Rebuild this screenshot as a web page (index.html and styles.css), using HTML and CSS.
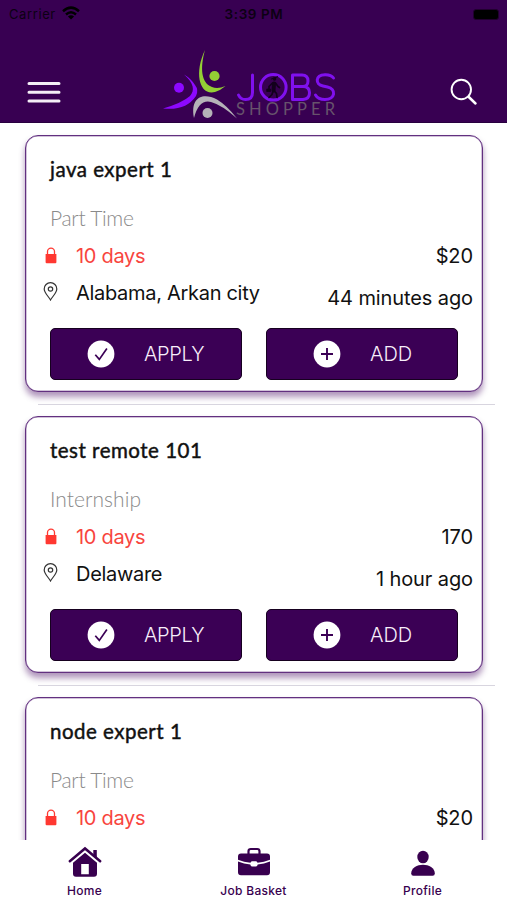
FILE: index.html
```html
<!DOCTYPE html>
<html lang="en">
<head>
<meta charset="utf-8">
<title>Jobs Shopper</title>
<link rel="stylesheet" href="styles.css">
</head>
<body>
<svg class="defs" aria-hidden="true">
  <symbol id="lock" viewBox="0 0 12 17"><path d="M.6 7h10.8v8.2q0 1-1 1H1.600q-1 0-1-1z" fill="currentColor"/><path d="M2.500 7.500V4.600a3.500 3.500 0 0 1 7 0v2.900" fill="none" stroke="currentColor" stroke-width="1.300"/></symbol>
  <symbol id="pin" viewBox="0 0 15 19"><path d="M7.500 18C5.800 14.800 1.200 10.800 1.200 7a6.300 6.300 0 0 1 12.600 0c0 3.800-4.600 7.800-6.300 11z" fill="none" stroke="currentColor" stroke-width="1.200"/><circle cx="7.500" cy="7" r="2.200" fill="none" stroke="currentColor" stroke-width="1.200"/></symbol>
  <symbol id="check" viewBox="0 0 28 28"><circle cx="14" cy="14" r="13.400" fill="#fff"/><path d="M8.300 14.800l4 4.600 7.600-10.900" fill="none" stroke="#3b0055" stroke-width="1.700"/></symbol>
  <symbol id="plus" viewBox="0 0 28 28"><circle cx="14" cy="14" r="13.400" fill="#fff"/><path d="M14 8v12M8 14h12" fill="none" stroke="#3b0055" stroke-width="1.900"/></symbol>
</svg>
<div class="screen">
  <header class="header">
    <div class="status">
      <div class="carrier"><span>Carrier</span><svg width="18" height="14" viewBox="0 0 18 14"><g fill="none" stroke="#000" stroke-width="2.500"><path d="M1 5.200Q9-2 17 5.200"/><path d="M4 8.500q5-4.400 10 0"/></g><path d="M9 13.500L5.900 10.500q3.100-2.600 6.200 0z"/></svg></div>
      <div class="clock"><span>3:39 PM</span></div>
      <div class="battery"><i></i></div>
    </div>
    <div class="navbar">
      <svg class="menu" width="34" height="24" viewBox="0 0 34 24"><path d="M2 3.500h30M2 12.300h30M2 21h30" stroke="#f4eef6" stroke-width="3" stroke-linecap="round"/></svg>
      <div class="brand">
        <svg width="76" height="70" viewBox="0 0 76 70">
          <path d="M42 1C30.500 25 37 47 52 43q6-2 10.500-6-8 3.500-13.500 1C38 34 37 19 42 1z" fill="#94cf35"/><circle cx="51.500" cy="27" r="5.100" fill="#94cf35"/>
          <path d="M21 25.500c10 9 11 15.500 6 21.500Q19 54 0 59.500q23 2.500 33-12.500 3-6-1-11-4-6.500-11-10.500z" fill="#8d08ff"/><circle cx="16" cy="38.800" r="5" fill="#8d08ff"/>
          <path d="M31 69C27 48 40 43 54 50.500q10 6 20 19-15-13.500-26-16.500-12-3-17 16z" fill="#b5b2b8"/><circle cx="44.500" cy="64" r="5" fill="#b5b2b8"/>
        </svg>
        <div class="wordmark">
          <svg class="jobs" width="102" height="30" viewBox="0 0 102 30" role="img" aria-label="JOBS"><g fill="none" stroke="#8010ee" stroke-width="3" stroke-linecap="round" stroke-linejoin="round"><path d="M16.500 3v17.500q0 7-7 7-5 0-7-4.500"/><circle cx="37.300" cy="15.300" r="12.800"/><path d="M56.500 3h9.500q6 0 6 6t-6 5.500h-9.500zM56.500 14.500H67q6.500 0 6.500 6.200T67 27.500H56.500zM97.500 6Q95 2.500 89 2.700c-10 .3-10 9.800-2 11.300l4.500 1c9 2 8 12.500-2.500 12.500q-7 0-9.500-4.500"/></g><g fill="none" stroke="#13001c" stroke-linecap="round" stroke-linejoin="round"><circle cx="38.500" cy="7" r="1.800" fill="#13001c" stroke="none"/><path d="M35.500 7l6-2.300" stroke-width="1.200"/><path d="M38 11.500l-.5 7" stroke-width="4"/><path d="M37 19l-1 3.500-3 3M38 18.500l2.500 3 .5 4M36.500 11l-3.500 3.500v2M39.500 11l2.500 3.500 1.500 1" stroke-width="1.700"/><path d="M31 17h3.500v2.500H31z" fill="#13001c" stroke-width=".8"/></g></svg>
          <div class="shopper">SHOPPER</div>
        </div>
      </div>
      <svg class="search" width="28" height="28" viewBox="0 0 28 28"><g fill="none" stroke="#fff" stroke-linecap="round"><circle cx="11.300" cy="11.500" r="9.700" stroke-width="1.900"/><path d="M18.800 19l6.700 6.500" stroke-width="2.500"/></g></svg>
    </div>
  </header>
  <main class="list">
    <section class="item"><article class="card">
      <h2 class="title">java expert 1</h2>
      <p class="type">Part Time</p>
      <div class="row"><svg class="lock"><use href="#lock"/></svg><span class="days">10 days</span><span class="price">$20</span></div>
      <div class="row place"><svg class="pin"><use href="#pin"/></svg><span class="city">Alabama, Arkan city</span><span class="ago">44 minutes ago</span></div>
      <div class="actions"><button class="btn apply"><svg><use href="#check"/></svg><span>APPLY</span></button><button class="btn add"><svg><use href="#plus"/></svg><span>ADD</span></button></div>
    </article></section>
    <section class="item"><article class="card">
      <h2 class="title">test remote 101</h2>
      <p class="type wide">Internship</p>
      <div class="row"><svg class="lock"><use href="#lock"/></svg><span class="days">10 days</span><span class="price">170</span></div>
      <div class="row place"><svg class="pin"><use href="#pin"/></svg><span class="city">Delaware</span><span class="ago">1 hour ago</span></div>
      <div class="actions"><button class="btn apply"><svg><use href="#check"/></svg><span>APPLY</span></button><button class="btn add"><svg><use href="#plus"/></svg><span>ADD</span></button></div>
    </article></section>
    <section class="item"><article class="card">
      <h2 class="title">node expert 1</h2>
      <p class="type">Part Time</p>
      <div class="row"><svg class="lock"><use href="#lock"/></svg><span class="days">10 days</span><span class="price">$20</span></div>
    </article></section>
  </main>
  <nav class="tabs">
    <a class="tab"><svg width="34" height="32" viewBox="0 0 34 32"><path d="M1.800 15.300L17 2.500l15.200 12.800" fill="none" stroke="currentColor" stroke-width="2.500" stroke-linecap="round"/><path d="M25.300 4h3.500v8l-3.500-3z" fill="currentColor"/><path d="M17 6.800l12 10v11q0 3-3 3H8q-3 0-3-3v-11zM13.200 18v10.300h7.600V18z" fill="currentColor" fill-rule="evenodd"/></svg><span>Home</span></a>
    <a class="tab"><svg width="34" height="32" viewBox="0 0 34 32"><path d="M11.500 8V5.300q0-2.300 2.300-2.300h6.400q2.300 0 2.300 2.300V8" fill="none" stroke="currentColor" stroke-width="2.200"/><path d="M4 7.500h26q3 0 3 3v3.200q-6 2.300-12.500 3-.3-1.500-1.500-1.500h-4q-1.200 0-1.500 1.500Q7 16 1 13.700v-3.200q0-3 3-3zM1 15.500q6 2.300 12.300 3 .4 2 1.700 2h4q1.300 0 1.700-2 6.300-.7 12.300-3v10.800q0 3-3 3H4q-3 0-3-3z" fill="currentColor"/></svg><span>Job Basket</span></a>
    <a class="tab"><svg width="34" height="32" viewBox="0 0 34 32"><ellipse cx="17" cy="11" rx="5.700" ry="6.300" fill="currentColor"/><path d="M5.200 27.500C5.200 15.800 28.800 15.800 28.800 27.500q0 2.200-2.200 2.200H7.400q-2.200 0-2.200-2.200z" fill="currentColor"/></svg><span>Profile</span></a>
  </nav>
</div>
</body>
</html>
```

FILE: styles.css
```css
* { box-sizing: border-box; }
body { margin: 0; background: #fff; font-family: Inter, "Liberation Sans", sans-serif; color: #111; }
h2, p { margin: 0; }
.defs { display: none; }
svg { display: block; flex: none; }
.screen { width: 507px; height: 900px; display: flex; flex-direction: column; overflow: hidden; }
.header { height: 123px; flex: none; background: #380052; border-bottom: 1px solid #290040; }
.status { height: 28px; display: grid; grid-template-columns: 1fr 1fr 1fr; align-items: center; padding: 0 8px 0 9px; color: #000; font-size: 13px; line-height: 28px; }
.carrier { display: flex; align-items: center; gap: 6px; color: #0c0013; letter-spacing: .6px; }
.carrier svg { margin-top: -2px; }
.clock { text-align: center; font-weight: 600; color: #0c0013; font-size: 13.500px; letter-spacing: .6px; }
.battery { display: flex; justify-content: flex-end; }
.battery i { width: 26px; height: 11px; border: 1px solid #21002f; border-radius: 3px; background: #000; }
.navbar { height: 94px; display: flex; align-items: flex-start; padding: 21px 29px 0 27px; }
.menu { margin-top: 31px; }
.search { margin-top: 29px; margin-left: auto; }
.brand { display: flex; margin-left: 102px; }
.wordmark { margin-left: -3px; padding-top: 23px; }
.shopper { font-family: Lato, sans-serif; font-size: 16.500px; line-height: 16px; margin-top: -1px; letter-spacing: 4.100px; color: #67536c; width: 104px; white-space: nowrap; }
.list { height: 717px; flex: none; overflow: hidden; padding-top: 12px; }
.item { height: 281px; padding: 0 24px 0 25px; }
.item::after { content: ""; display: block; height: 1px; margin: 12px -12px 0 13px; background: #d8d5df; }
.card { height: 257px; border: 1px solid #623080; border-radius: 13px; background: #fff; box-shadow: inset 0 0 0 .5px #a486b4, 0 5px 6px rgba(65, 0, 92, .42); padding: 19px 9px 0 17px; display: flex; flex-direction: column; }
.title { font: 400 20.500px/28px Lato, sans-serif; color: #111; letter-spacing: .5px; margin-left: 7px; -webkit-text-stroke: .45px #111; }
.type { font: 300 21px/26px Lato, sans-serif; color: #8a8a8a; margin: 22px 0 0 7px; letter-spacing: -.3px; }
.type.wide { letter-spacing: .05px; }
.row { display: flex; align-items: center; height: 26px; margin-top: 12px; font-size: 20px; line-height: 26px; letter-spacing: -.3px; white-space: nowrap; }
.lock { width: 12px; height: 17px; color: #ff3831; margin: -2px 19px 0 2px; }
.days { color: #f8453e; }
.price, .ago { margin-left: auto; letter-spacing: -.1px; }
.place { margin-top: 11px; }
.pin { width: 15px; height: 19px; color: #333; margin: -4px 18px 0 0; }
.ago { padding-top: 9px; }
.actions { display: flex; gap: 24px; margin: 22px 0 0 7px; }
.btn { width: 192px; height: 52px; border: 1.500px solid #16001f; border-radius: 5px; background: #3b0055; color: #f8effb; font: 300 20px/26px Inter, sans-serif; display: flex; align-items: center; padding: 0 0 0 36px; }
.btn svg { width: 28px; height: 28px; }
.btn span { margin-left: 29px; letter-spacing: -.4px; }
.btn.add { padding-left: 46px; }
.btn.add span { letter-spacing: 0; }
.tabs { height: 60px; flex: none; background: #fff; display: flex; justify-content: space-around; color: #38004f; }
.tab { width: 169px; display: flex; flex-direction: column; align-items: center; padding-top: 6px; font-size: 12px; line-height: 16px; font-weight: 500; letter-spacing: .3px; }
.tab span { margin-top: 5px; }
```
